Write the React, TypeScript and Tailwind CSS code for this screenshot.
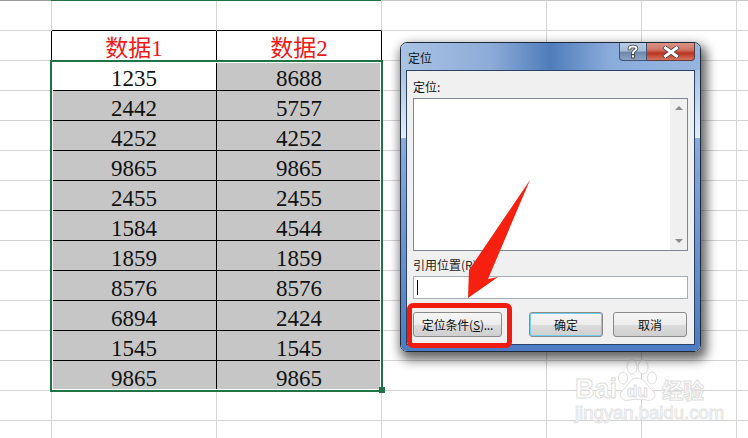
import React from "react";

const DATA = [
  ["1235", "8688"],
  ["2442", "5757"],
  ["4252", "4252"],
  ["9865", "9865"],
  ["2455", "2455"],
  ["1584", "4544"],
  ["1859", "1859"],
  ["8576", "8576"],
  ["6894", "2424"],
  ["1545", "1545"],
  ["9865", "9865"],
];

const BLANK_COLS = [0, 1, 2, 3, 4, 5, 6];

// Plain gridlines for the rows with nothing in them
const BlankRow = ({ dark = false }: { dark?: boolean }) => (
  <>
    {BLANK_COLS.map((c) => (
      <div
        key={c}
        className={`border-r border-b border-[#d4d4d4] ${
          dark && (c === 1 || c === 2) ? "border-b-black" : ""
        } ${c === 6 ? "border-r-0" : ""}`}
      />
    ))}
  </>
);

const Cell = ({
  text,
  selected,
  red,
}: {
  text: string;
  selected?: boolean;
  red?: boolean;
}) => (
  <div
    className={`flex items-end justify-center border-r border-b border-black font-['Liberation_Serif','Noto_Sans_CJK_SC',serif] text-[23px] leading-[22px] ${
      selected ? "bg-[#c6c6c6]" : "bg-white"
    } ${red ? "text-[#f01818]" : "text-[#111]"}`}
  >
    {text}
  </div>
);

const Row = ({ a, b, i }: { a: string; b: string; i: number }) => (
  <>
    <div className="border-r border-b border-[#d4d4d4] border-r-black" />
    <Cell text={a} selected={i > 0} />
    <Cell text={b} selected />
    <div className="border-b border-r border-[#d4d4d4]" />
    <div className="border-b border-r border-[#d4d4d4]" />
    <div className="border-b border-r border-[#d4d4d4]" />
    <div className="border-b border-[#d4d4d4]" />
  </>
);

const WinButton = ({
  children,
  className = "",
}: {
  children: React.ReactNode;
  className?: string;
}) => (
  <div
    className={`flex h-[25px] items-center justify-center rounded-[3px] border border-[#8a8a8a] bg-[linear-gradient(180deg,#f6f6f6_0%,#ececec_50%,#dcdcdc_50%,#cfcfcf_100%)] text-[12px] text-[#111] ${className}`}
  >
    {children}
  </div>
);

const Dialog = () => (
  <div className="absolute top-[42px] left-[400px] flex h-[310px] w-[301px] flex-col overflow-hidden rounded-[7px] border border-[#1d2a3a]">
    <div className="relative h-[27px] shrink-0 bg-[linear-gradient(90deg,#a9c3e4_0%,#8dabd8_30%,#4f7dbb_50%,#8bacdb_70%,#95b5df_100%)]">
      <span className="absolute top-[6px] left-[7px] text-[12px] text-[#101820]">定位</span>
      <div className="absolute top-0 right-[5px] flex h-[18px]">
        <div className="flex w-[28px] items-center justify-center rounded-bl-[4px] border border-t-0 border-[#3f5675] bg-[linear-gradient(180deg,#b9cbe3_0%,#a9bdd9_45%,#6f88ab_55%,#8ba2c2_100%)]">
          <svg width="12" height="15" viewBox="0 0 12 15">
            <path
              d="M2.5 4.5 C2.5 2 9.5 1.5 9.5 4.5 C9.5 6.5 6 6.5 6 9 M6 12.2 L6 12.6"
              fill="none"
              stroke="#3b3f45"
              strokeWidth="3.6"
              strokeLinecap="square"
            />
            <path
              d="M2.5 4.5 C2.5 2 9.5 1.5 9.5 4.5 C9.5 6.5 6 6.5 6 9 M6 12.2 L6 12.6"
              fill="none"
              stroke="#fff"
              strokeWidth="2"
              strokeLinecap="square"
            />
          </svg>
        </div>
        <div className="flex w-[48px] items-center justify-center rounded-br-[4px] border border-t-0 border-l-0 border-[#5c3a3a] bg-[linear-gradient(180deg,#dc9486_0%,#cf7466_40%,#b8351f_60%,#d7735f_100%)]">
          <svg width="18" height="12" viewBox="0 0 18 12">
            <path
              d="M3.5 2 L14.5 10 M14.5 2 L3.5 10"
              stroke="#3b3f45"
              strokeWidth="4.4"
              strokeLinecap="square"
            />
            <path
              d="M3.5 2 L14.5 10 M14.5 2 L3.5 10"
              stroke="#fff"
              strokeWidth="3"
              strokeLinecap="square"
            />
          </svg>
        </div>
      </div>
    </div>
    {/* side frame is light at the top, then jumps to blue where the sheet behind shows through */}
    <div className="flex-1 bg-[linear-gradient(180deg,#a9c3e4_0px,#e4edf8_68px,#8aabdd_68px,#4c7cc4_100%)] px-[5px] pb-[6px]">
      <div className="flex h-full flex-col border border-[#2a4365] bg-[#f0f0f0] px-[6px]">
        <span className="mt-[7px] h-[20px] text-[12px] leading-[18px] text-[#111]">定位:</span>
        <div className="flex h-[153px] shrink-0 border border-[#7f8791] bg-white">
          <div className="flex-1" />
          <div className="flex w-[17px] flex-col items-center justify-between bg-[#f0f0f0] py-[7px]">
            <div className="h-0 w-0 border-x-[4px] border-b-[4px] border-x-transparent border-b-[#8a8a8a]" />
            <div className="h-0 w-0 border-x-[4px] border-t-[4px] border-x-transparent border-t-[#8a8a8a]" />
          </div>
        </div>
        <span className="mt-[4px] h-[21px] text-[12px] leading-[20px] text-[#222]">引用位置(R):</span>
        <div className="flex h-[23px] shrink-0 items-center border border-[#a8aeb6] bg-white pl-[3px]">
          <div className="h-[15px] w-px bg-black" />
        </div>
        <div className="mt-[13px] flex">
          <WinButton className="w-[89px]">
            <span className="tracking-[-0.2px]">
              定位条件(<span className="underline">S</span>)...
            </span>
          </WinButton>
          <WinButton className="ml-[27px] w-[74px] border-[#3c9ed0] shadow-[inset_0_0_0_1px_#6fd0f5]">
            确定
          </WinButton>
          <WinButton className="ml-[10px] w-[74px]">取消</WinButton>
        </div>
      </div>
    </div>
  </div>
);

const Annotations = () => (
  <>
    <div className="absolute top-[303px] left-[407px] h-[45px] w-[105px] rounded-[6px] border-[5px] border-[#f01c10]" />
    <svg
      className="absolute top-0 left-0"
      width="748"
      height="438"
      viewBox="0 0 748 438"
    >
      <polygon
        points="530,180 488,279 498,277 468,298 469,270"
        fill="#f52010"
      />
    </svg>
  </>
);

const Watermark = () => (
  <div className="absolute top-[356px] left-[573px] h-[70px] w-[140px]">
    <svg className="absolute top-[2px] left-[44px]" width="46" height="46" viewBox="0 0 46 46">
      <g fill="#fff" stroke="#dedede" strokeWidth="1">
        <ellipse cx="15" cy="9" rx="5" ry="7" />
        <ellipse cx="26" cy="9" rx="5" ry="7" />
        <ellipse cx="6" cy="20" rx="4.5" ry="6" />
        <ellipse cx="35" cy="20" rx="4.5" ry="6" />
        <path d="M20 20 C13 20 11 28 5 33 C0 38 6 44 13 42 C18 41 24 41 29 42 C36 44 41 38 36 33 C30 28 27 20 20 20 Z" />
      </g>
    </svg>
    <span className="absolute top-[20px] left-[2px] font-['Liberation_Sans',sans-serif] text-[27px] leading-[27px] font-bold text-white [-webkit-text-stroke:1px_#dedede]">
      Bai
    </span>
    <span className="absolute top-[27px] left-[54px] font-['Liberation_Sans',sans-serif] text-[17px] leading-[18px] font-bold text-white [-webkit-text-stroke:1px_#dedede]">
      du
    </span>
    <span className="absolute top-[21px] left-[89px] font-['Noto_Sans_CJK_SC',sans-serif] text-[21px] leading-[24px] font-bold text-white [-webkit-text-stroke:1px_#dedede]">
      经验
    </span>
    <span className="absolute top-[46px] left-[2px] font-['Liberation_Sans',sans-serif] text-[18.5px] leading-[22px] whitespace-nowrap text-white [-webkit-text-stroke:1px_#e4e4e4]">
      jingyan.baidu.com
    </span>
  </div>
);

export default function App() {
  return (
    <div className="relative h-[438px] w-[748px] overflow-hidden bg-white font-['Noto_Sans_CJK_SC',sans-serif]">
      <div className="grid grid-cols-[52px_165px_165px_165px_95px_95px_11px] grid-rows-[31px_repeat(14,30px)]">
        <BlankRow dark />
        <div className="border-r border-b border-[#d4d4d4] border-r-black" />
        <Cell text="数据1" red />
        <Cell text="数据2" red />
        <div className="border-b border-r border-[#d4d4d4]" />
        <div className="border-b border-r border-[#d4d4d4]" />
        <div className="border-b border-r border-[#d4d4d4]" />
        <div className="border-b border-[#d4d4d4]" />
        {DATA.map((row, i) => (
          <Row key={i} a={row[0]} b={row[1]} i={i} />
        ))}
        <BlankRow />
        <BlankRow />
      </div>

      {/* top edge: header strip and the active column marker */}
      <div className="absolute top-0 left-0 h-px w-[51px] bg-[#9c9c9c]" />
      <div className="absolute top-0 left-[51px] h-px w-[330px] bg-[#217346]" />
      <div className="absolute top-0 left-[381px] h-px w-[367px] bg-[#c8c8c8]" />

      {/* selection box */}
      <div className="absolute top-[60px] left-[50px] h-[332px] w-[333px] border-2 border-[#217346] shadow-[inset_0_0_0_1px_#fff]" />
      <div className="absolute top-[387px] left-[379px] h-[6px] w-[6px] bg-[#217346]" />

      <Watermark />
      {/* window shadow sits on its own layer, the dialog clips its children */}
      <div className="absolute top-[43px] left-[400px] h-[309px] w-[301px] rounded-[7px] shadow-[3px_5px_11px_3px_rgba(0,0,0,0.6)]" />
      <Dialog />
      <Annotations />
    </div>
  );
}
